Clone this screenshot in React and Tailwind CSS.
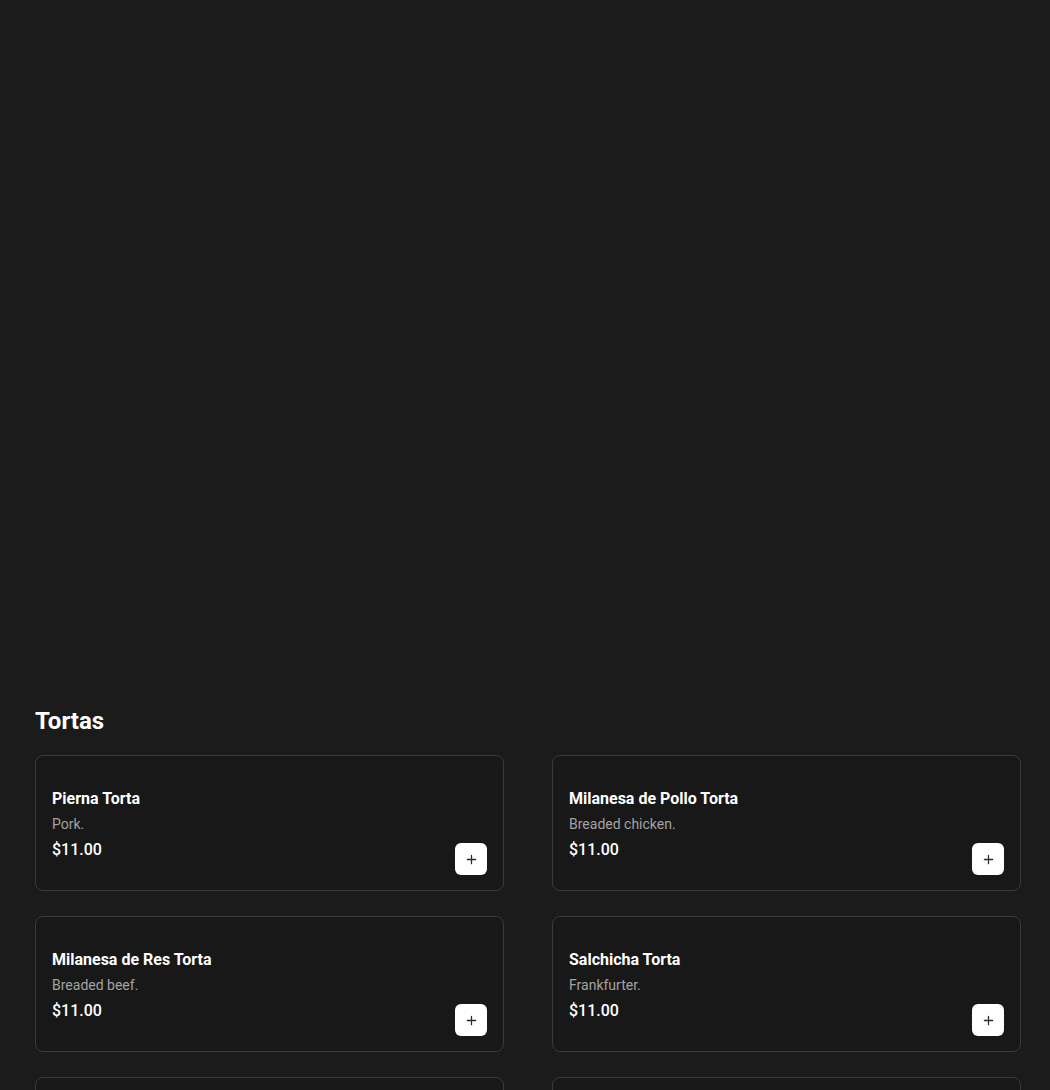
import React from 'react';

const items = [
  { name: 'Pierna Torta', desc: 'Pork.', price: '$11.00' },
  { name: 'Milanesa de Pollo Torta', desc: 'Breaded chicken.', price: '$11.00' },
  { name: 'Milanesa de Res Torta', desc: 'Breaded beef.', price: '$11.00' },
  { name: 'Salchicha Torta', desc: 'Frankfurter.', price: '$11.00' },
  { name: 'Cubana Torta', desc: 'Mixed meats.', price: '$12.00' },
  { name: 'Asada Torta', desc: 'Steak.', price: '$11.00' },
];

const PlusIcon = () => (
  <svg width="11" height="11" viewBox="0 0 12 12" fill="none">
    <path d="M6 1.5v9M1.5 6h9" stroke="#2a2a2a" strokeWidth="1.4" strokeLinecap="round" />
  </svg>
);

const ItemCard = ({ item }) => (
  <div className="flex h-[136px] rounded-lg border border-[#3b3b3b] bg-[#181818] px-4 pb-[15px]">
    <div className="flex flex-1 flex-col justify-center pt-[18px]">
      <h3 className="text-base font-bold leading-6 text-white">{item.name}</h3>
      <p className="mt-[3px] text-sm leading-5 text-[#a3a3a3]">{item.desc}</p>
      <p className="mt-1 text-base font-medium leading-6 text-white">{item.price}</p>
    </div>
    <div className="flex items-end">
      <button className="flex h-8 w-8 items-center justify-center rounded-md bg-white">
        <PlusIcon />
      </button>
    </div>
  </div>
);

const App = () => {
  return (
    <div
      className="min-h-screen bg-[#1b1b1b] text-white"
      style={{ fontFamily: 'Roboto, "Liberation Sans", sans-serif' }}
    >
      <div className="h-[705px]" />
      <section className="pl-[35px] pr-[29px] pb-10">
        <h2 className="text-2xl font-bold leading-8 text-white">Tortas</h2>
        <div className="mt-[18px] grid grid-cols-[469px_469px] gap-x-12 gap-y-[25px]">
          {items.map((item) => (
            <ItemCard key={item.name} item={item} />
          ))}
        </div>
      </section>
    </div>
  );
};

export default App;
